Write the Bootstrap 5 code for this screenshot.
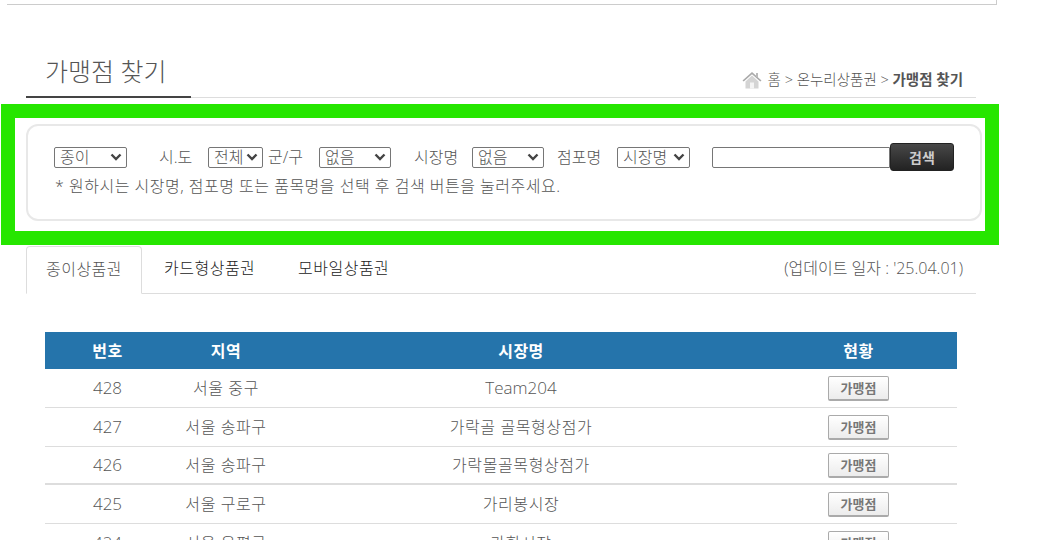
<!DOCTYPE html>
<html lang="ko">
<head>
    <meta charset="UTF-8">
    <meta name="viewport" content="width=device-width, initial-scale=1.0">
    <title>가맹점 찾기</title>
    <link rel="stylesheet" href="https://cdn.jsdelivr.net/npm/bootstrap@5.3.0/dist/css/bootstrap.min.css">
    <style>
        html, body { height: 540px; overflow: hidden; }
        body { font-family: "Open Sans", "Noto Sans CJK KR", sans-serif; font-weight: 300; color: #555; background: #fff; font-size: 16px; }
        .top-box { height: 5px; margin-left: 7px; width: 990px; border-right: 1px solid #ccc; border-bottom: 1px solid #ccc; background: #fff; }
        .title-row { margin: 49px 0 0 26px; width: 950px; height: 44px; border-bottom: 1px solid #ddd; }
        .page-title { font-family: inherit; font-size: 25px; font-weight: 300; line-height: 34px; margin: 0; width: 165px; height: 44px; padding-left: 19px; border-bottom: 2px solid #444; color: #555; }
        .crumbs { font-size: 14.5px; padding: 8px 13px 0 0; line-height: 24px; color: #555; }
        .crumbs b { font-weight: 700; color: #555; }
        .crumbs svg { margin-right: 2px; }
        .green-box { margin: 6px 0 0 1px; width: 998px; height: 141px; border: 14px solid #26e600; padding: 6px 3px 0 11px; }
        .search-panel { height: 97px; border: 2px solid #e8e8e8; border-radius: 12px; padding: 17px 0 0 26px; }
        .search-row { height: 28px; align-items: center; }
        .search-row select {
            appearance: none; height: 21px; border: 1px solid #767676; border-radius: 2px; color: #555;
            font: inherit; font-size: 16px; line-height: 19px; padding: 0 16px 0 5px; overflow: hidden;
            background: #fff url("data:image/svg+xml,%3Csvg xmlns='http://www.w3.org/2000/svg' width='12' height='8'%3E%3Cpath d='M1.500 1.500 6 6l4.500-4.500' fill='none' stroke='%23444' stroke-width='2.400'/%3E%3C/svg%3E") no-repeat right 4px center;
        }
        .search-row label { line-height: 21px; }
        .sel-a { width: 73px; }
        .sel-b { width: 55px; }
        .sel-c { width: 72px; }
        .lbl-a { margin-left: 32px; width: 49px; }
        .lbl-b { margin-left: 5px; width: 51px; }
        .lbl-c { margin-left: 23px; width: 58px; }
        .lbl-d { margin-left: 13px; width: 60px; }
        .kw-input { width: 178px; height: 21px; margin-left: 22px; border: 1px solid #767676; border-radius: 2px 0 0 2px; }
        .kw-btn { width: 64px; height: 28px; padding: 0; border: 1px solid #222; border-radius: 3px; background: linear-gradient(#484848, #222); color: #ccc; font-size: 14px; font-weight: 700; }
        .search-note { margin: 3px 0 0 1px; line-height: 24px; letter-spacing: .5px; }
        .tab-row { margin: 1px 0 0 26px; width: 950px; height: 48px; border-bottom: 1px solid #ddd; }
        .tab-item { height: 48px; line-height: 44px; color: #222; letter-spacing: .5px; }
        .tab-on { width: 116px; text-align: center; color: #555; border: 1px solid #ddd; border-bottom: 1px solid #fff; border-radius: 4px 4px 0 0; }
        .tab-b { margin-left: 22px; width: 134px; }
        .update-date { margin-left: auto; padding-right: 13px; line-height: 44px; }
        .shop-table { margin: 38px 0 0 45px; width: 912px; table-layout: fixed; border-collapse: collapse; }
        .shop-table th { height: 37px; background: #2574ab; color: #fff; font-weight: 700; text-align: center; padding: 0; letter-spacing: .5px; }
        .shop-table td { height: 39px; text-align: center; border-bottom: 1px solid #ddd; padding: 0; letter-spacing: .6px; }
        .shop-table tr.first-row td { height: 38px; }
        .shop-table td.cell-num { font-size: 17px; letter-spacing: 0; }
        .shop-table tr.thick td { height: 38px; border-bottom-width: 2px; }
        .shop-btn { display: inline-block; width: 61px; height: 25px; line-height: 22px; border: 1px solid #aaa; border-bottom-width: 2px; border-radius: 2px; background: linear-gradient(#fff, #ececec); color: #777; font-size: 13px; font-weight: 700; padding: 0; vertical-align: middle; letter-spacing: 0; }
    </style>
</head>
<body>

    <div class="top-box"></div>

    <!-- 제목 -->
    <div class="title-row d-flex justify-content-between">
        <h1 class="page-title">가맹점 찾기</h1>
        <div class="crumbs d-flex align-items-center">
            <svg width="20" height="18" viewBox="0 0 20 18">
                <path d="M0.500 9.500 10 1l9.500 8.500-1.200 1L10 3.300 1.700 10.500z" fill="#aaa"/>
                <path d="M3.500 10.500 10 4.500l6.500 6V17.500h-13z" fill="#d4d4d4"/>
                <path d="M8 11.500h4v6H8z" fill="#f4f4f4"/>
                <rect x="14" y="2" width="2" height="4" fill="#bbb"/>
            </svg>
            <span class="ms-1">홈 &gt; 온누리상품권 &gt; <b>가맹점 찾기</b></span>
        </div>
    </div>

    <!-- 검색 -->
    <div class="green-box">
        <div class="search-panel">
            <div class="search-row d-flex">
                <select class="sel-a"><option>종이</option></select>
                <label class="lbl-a">시.도</label>
                <select class="sel-b"><option>전체</option></select>
                <label class="lbl-b">군/구</label>
                <select class="sel-c"><option>없음</option></select>
                <label class="lbl-c">시장명</label>
                <select class="sel-c"><option>없음</option></select>
                <label class="lbl-d">점포명</label>
                <select class="sel-a"><option>시장명</option></select>
                <input type="text" class="kw-input">
                <button type="button" class="kw-btn">검색</button>
            </div>
            <p class="search-note">* 원하시는 시장명, 점포명 또는 품목명을 선택 후 검색 버튼을 눌러주세요.</p>
        </div>
    </div>

    <!-- 탭 -->
    <div class="tab-row d-flex">
        <div class="tab-item tab-on">종이상품권</div>
        <div class="tab-item tab-b">카드형상품권</div>
        <div class="tab-item">모바일상품권</div>
        <div class="update-date">(업데이트 일자 : '25.04.01)</div>
    </div>

    <!-- 목록 -->
    <table class="shop-table">
        <colgroup>
            <col width="125"><col width="112"><col width="478"><col width="197">
        </colgroup>
        <thead>
            <tr><th>번호</th><th>지역</th><th>시장명</th><th>현황</th></tr>
        </thead>
        <tbody>
            <tr class="first-row"><td class="cell-num">428</td><td>서울 중구</td><td class="cell-num">Team204</td><td><button type="button" class="shop-btn">가맹점</button></td></tr>
            <tr><td class="cell-num">427</td><td>서울 송파구</td><td>가락골 골목형상점가</td><td><button type="button" class="shop-btn">가맹점</button></td></tr>
            <tr class="thick"><td class="cell-num">426</td><td>서울 송파구</td><td>가락몰골목형상점가</td><td><button type="button" class="shop-btn">가맹점</button></td></tr>
            <tr><td class="cell-num">425</td><td>서울 구로구</td><td>가리봉시장</td><td><button type="button" class="shop-btn">가맹점</button></td></tr>
            <tr><td class="cell-num">424</td><td>서울 은평구</td><td>가학시장</td><td><button type="button" class="shop-btn">가맹점</button></td></tr>
        </tbody>
    </table>

</body>
</html>
